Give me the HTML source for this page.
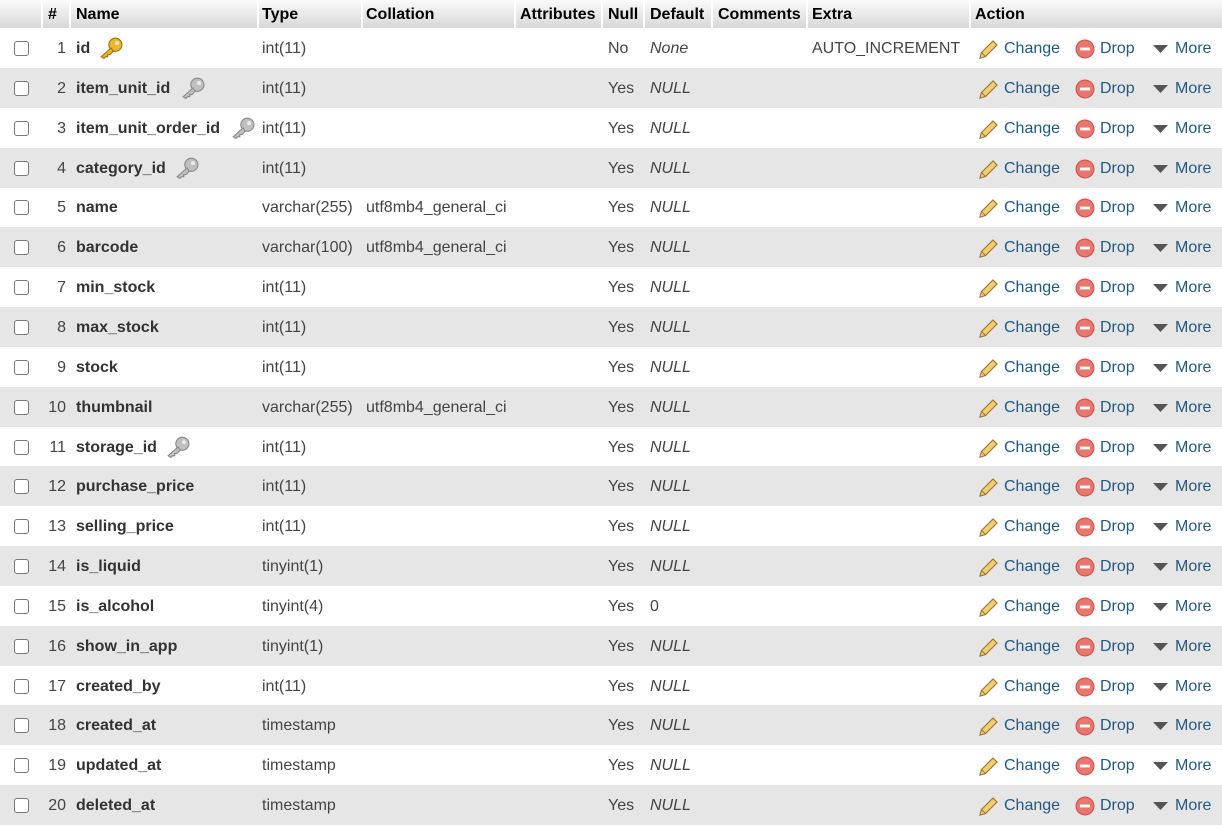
<!DOCTYPE html>
<html><head><meta charset="utf-8"><style>
body{margin:0;width:1222px;height:826px;overflow:hidden;background:#fff;font-family:"Liberation Sans",Arial,sans-serif;font-size:16px;color:#444}
.h{position:absolute;left:0;top:0;width:1222px;height:28px;background:linear-gradient(#fafafa,#d8d8d8)}
.h span{position:absolute;top:6px;font-weight:bold;color:#000}
.sep{position:absolute;top:0;width:2px;height:28px;background:#fff}
.r{position:absolute;left:0;width:1222px;height:40px}
.r.e{background:#e6e6e6}
.r>*{position:absolute;top:12px;white-space:nowrap}
.cb{left:14px;top:13px!important;width:13px;height:13px;border:1px solid #777;border-radius:3px;background:#fff}
.n{right:1156px;text-align:right}
.nm{left:76px;font-weight:bold;color:#333}
.a{color:#235a81}
i{font-style:italic}
svg{position:absolute}
</style></head><body>
<div class="h">
<span style="left:48px">#</span><span style="left:76px">Name</span><span style="left:262px">Type</span><span style="left:366px">Collation</span><span style="left:520px">Attributes</span><span style="left:608px">Null</span><span style="left:650px">Default</span><span style="left:718px">Comments</span><span style="left:812px">Extra</span><span style="left:975px">Action</span>
<div class="sep" style="left:41px"></div><div class="sep" style="left:69px"></div><div class="sep" style="left:257px"></div><div class="sep" style="left:361px"></div><div class="sep" style="left:514px"></div><div class="sep" style="left:601px"></div><div class="sep" style="left:643px"></div><div class="sep" style="left:711px"></div><div class="sep" style="left:806px"></div><div class="sep" style="left:969px"></div>
</div>
<div id="rows"></div>
<script>
var d=[["id","int(11)","","No","None","AUTO_INCREMENT","g"],
["item_unit_id","int(11)","","Yes","NULL","","s"],
["item_unit_order_id","int(11)","","Yes","NULL","","s"],
["category_id","int(11)","","Yes","NULL","","s"],
["name","varchar(255)","utf8mb4_general_ci","Yes","NULL",""],
["barcode","varchar(100)","utf8mb4_general_ci","Yes","NULL",""],
["min_stock","int(11)","","Yes","NULL",""],
["max_stock","int(11)","","Yes","NULL",""],
["stock","int(11)","","Yes","NULL",""],
["thumbnail","varchar(255)","utf8mb4_general_ci","Yes","NULL",""],
["storage_id","int(11)","","Yes","NULL","","s"],
["purchase_price","int(11)","","Yes","NULL",""],
["selling_price","int(11)","","Yes","NULL",""],
["is_liquid","tinyint(1)","","Yes","NULL",""],
["is_alcohol","tinyint(4)","","Yes","0",""],
["show_in_app","tinyint(1)","","Yes","NULL",""],
["created_by","int(11)","","Yes","NULL",""],
["created_at","timestamp","","Yes","NULL",""],
["updated_at","timestamp","","Yes","NULL",""],
["deleted_at","timestamp","","Yes","NULL",""]];
var h="";
var kx={id:99,item_unit_id:181,item_unit_order_id:231,category_id:175,storage_id:166};
d.forEach(function(r,i){
 var top=28+i*39.85;
 var def=r[4]=="0"?r[4]:"<i>"+r[4]+"</i>";
 var key="";
 if(r[6]){var c=r[6]=="g"?"#e8b830":"#c0c0c0",c2=r[6]=="g"?"#a07010":"#888";
 key='<svg style="left:'+kx[r[0]]+'px;top:9px" width="24" height="22" viewBox="0 0 22 20"><circle cx="15" cy="7" r="6" fill="'+c+'" stroke="'+c2+'"/><circle cx="16.5" cy="5.5" r="1.8" fill="#fff" opacity=".7"/><path d="M11 10 L2 18 L4.5 19.5 L6 18 L8 18 L8 16 L10 16 L13 13Z" fill="'+c+'" stroke="'+c2+'"/></svg>';}
 h+='<div class="r'+(i%2?' e':'')+'" style="top:'+top+'px"><div class="cb"></div><span class="n">'+(i+1)+'</span><span class="nm">'+r[0]+'</span>'+key+
 '<span style="left:262px">'+r[1]+'</span><span style="left:366px">'+r[2]+'</span><span style="left:608px">'+r[3]+'</span><span style="left:650px">'+def+'</span><span style="left:812px">'+r[5]+'</span>'+
 '<svg style="left:978px;top:10px" width="22" height="22" viewBox="0 0 22 22"><path d="M2 20 L3.5 14.5 L15 3 L19 7 L7.5 18.5Z" fill="#f0cf70" stroke="#a07830" stroke-width="1.2"/><path d="M2 20 L3.5 14.5 L7.5 18.5Z" fill="#e8c8a0" stroke="#a07830"/></svg><span class="a" style="left:1004px">Change</span>'+
 '<svg style="left:1075px;top:11px" width="20" height="20" viewBox="0 0 20 20"><circle cx="10" cy="10" r="9.5" fill="#d9534f"/><circle cx="10" cy="10" r="8.3" fill="#e8776f"/><rect x="5" y="8.6" width="10" height="2.8" fill="#fff"/></svg><span class="a" style="left:1100px">Drop</span>'+
 '<svg style="left:1152px;top:16px" width="17" height="10" viewBox="0 0 17 10"><path d="M1 1 L16 1 L8.5 9Z" fill="#555"/></svg><span class="a" style="left:1175px">More</span></div>';
});
document.getElementById("rows").innerHTML=h;
</script>
</body></html>
